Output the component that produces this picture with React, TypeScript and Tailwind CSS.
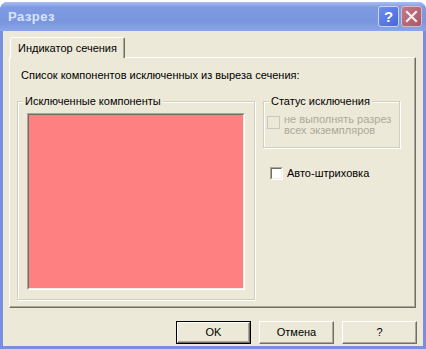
import React from 'react';

const font = { fontFamily: '"Liberation Sans", Arial, sans-serif' };

const GroupBox = ({ label, className, children }: { label: string; className: string; children?: React.ReactNode }) => (
  <div className={`relative border border-[#D0D0BF] shadow-[inset_1px_1px_0_#fff,1px_1px_0_#fff] ${className}`}>
    <span className="absolute -top-[8px] left-[5px] bg-[#ECE9D8] px-[2px] text-[11px] leading-[14px] text-black">{label}</span>
    {children}
  </div>
);

const CheckBox = ({ disabled }: { disabled?: boolean }) =>
  disabled ? (
    <span className="block w-[13px] h-[13px] shrink-0 border border-[#CAC8BB] bg-[#ECE9D8]" />
  ) : (
    <span className="block w-[13px] h-[13px] shrink-0 border border-t-[#ACA899] border-l-[#ACA899] border-b-white border-r-white">
      <span className="block w-full h-full bg-white border border-t-[#716F64] border-l-[#716F64] border-b-[#F1EFE2] border-r-[#F1EFE2]" />
    </span>
  );

const Button = ({ label, primary }: { label: string; primary?: boolean }) => (
  <div className={`w-[75px] h-[23px] ${primary ? 'border border-black' : ''}`}>
    <div className="w-full h-full flex items-center justify-center bg-[#ECE9D8] border border-t-white border-l-white border-b-[#716F64] border-r-[#716F64] shadow-[inset_-1px_-1px_0_#ACA899] text-[11px] text-black">
      {label}
    </div>
  </div>
);

export default function App() {
  return (
    <div className="w-[426px] h-[349px] bg-white overflow-hidden" style={font}>
      <div className="mt-[2px] h-[347px] flex flex-col rounded-t-[8px] bg-[#7A8EE0] px-[3px] pb-[3px]">
        {/* title bar */}
        <div className="h-[29px] -mx-[3px] px-[8px] flex items-center rounded-t-[8px] bg-[linear-gradient(#A9BEF0_0%,#7E9AE2_18%,#7A96DF_70%,#8AA5E8_100%)]">
          <span className="text-[13px] font-bold text-[#D8E4F8] tracking-[0.5px]">Разрез</span>
          <div className="ml-auto flex gap-[2px] mr-[-4px]">
            <div className="w-[21px] h-[21px] rounded-[3px] border border-[#C8D4F4] bg-[linear-gradient(135deg,#6F8FF0,#4466DD)] flex items-center justify-center">
              <span className="text-white font-bold text-[15px] leading-none">?</span>
            </div>
            <div className="w-[21px] h-[21px] rounded-[3px] border border-[#DAB8C4] bg-[linear-gradient(135deg,#C07A88,#A85866)] flex items-center justify-center">
              <svg width="13" height="13" viewBox="0 0 13 13">
                <path d="M2 2 L11 11 M11 2 L2 11" stroke="#F4ECEE" strokeWidth="2.2" strokeLinecap="square" />
              </svg>
            </div>
          </div>
        </div>
        {/* client */}
        <div className="flex-1 bg-[#ECE9D8] flex flex-col px-[6px] pt-[6px]">
          <div className="flex">
            <div className="ml-[1px] h-[21px] px-[7px] flex items-center border border-b-0 border-t-white border-l-white border-r-[#716F64] rounded-t-[2px] shadow-[inset_-1px_0_0_#ACA899] text-[11px] text-black relative z-10 bg-[#ECE9D8] mb-[-1px]">
              Индикатор сечения
            </div>
          </div>
          <div className="h-[251px] w-[407px] border border-t-white border-l-white border-b-[#716F64] border-r-[#716F64] shadow-[inset_-1px_-1px_0_#ACA899] px-[7px] pt-[10px]">
            <div className="ml-[4px] text-[11px] leading-[14px] text-black">Список компонентов исключенных из выреза сечения:</div>
            <div className="flex mt-[19px]">
              <GroupBox label="Исключенные компоненты" className="w-[238px] h-[199px] px-[9px] pt-[11px]">
                <div className="w-[218px] h-[177px] border border-t-[#ACA899] border-l-[#ACA899] border-b-white border-r-white">
                  <div className="w-full h-full bg-[#FF8080] border border-t-[#716F64] border-l-[#716F64] border-b-[#F1EFE2] border-r-[#F1EFE2]" />
                </div>
              </GroupBox>
              <div className="ml-[8px] flex flex-col">
                <GroupBox label="Статус исключения" className="w-[137px] h-[47px] pl-[3px] pt-[14px]">
                  <div className="flex gap-[4px]">
                    <CheckBox disabled />
                    <div className="text-[11px] leading-[11px] text-[#ACA899] -mt-[2px]">
                      не выполнять разрез
                      <br />
                      всех экземпляров
                    </div>
                  </div>
                </GroupBox>
                <div className="mt-[17px] ml-[7px] flex items-center gap-[4px]">
                  <CheckBox />
                  <span className="text-[11px] text-black">Авто-штриховка</span>
                </div>
              </div>
            </div>
          </div>
          <div className="mt-[13px] flex justify-end gap-[8px]">
            <Button label="OK" primary />
            <Button label="Отмена" />
            <Button label="?" />
          </div>
        </div>
      </div>
    </div>
  );
}
